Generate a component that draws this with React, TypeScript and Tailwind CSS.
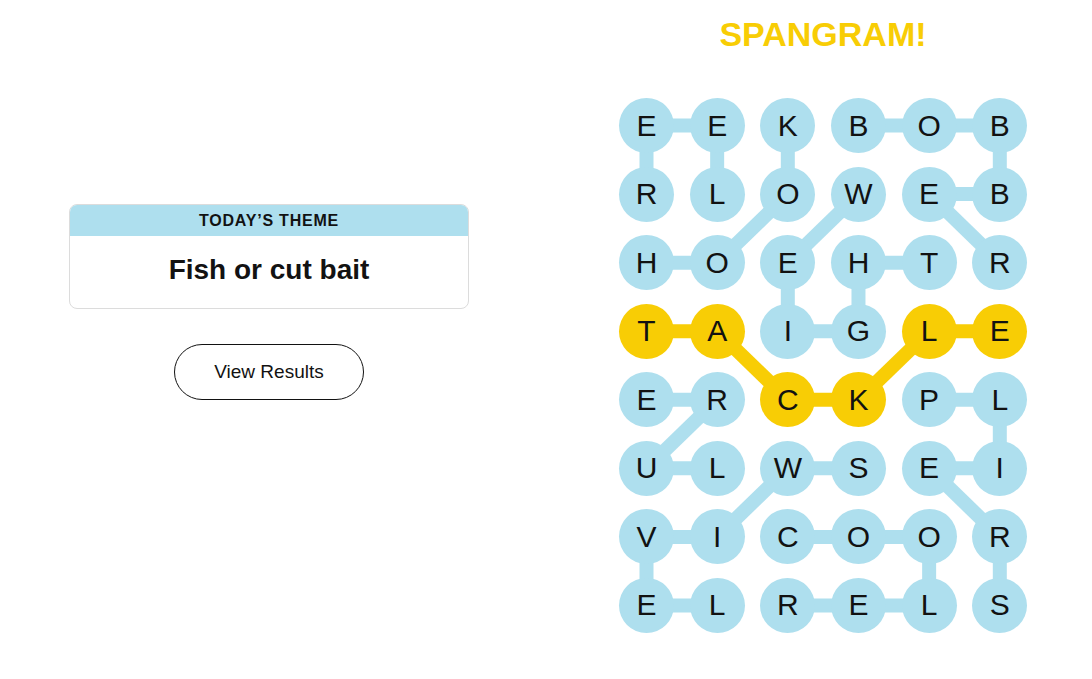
const LETTERS = [
  "EEKBOB",
  "RLOWEB",
  "HOEHTR",
  "TAIGLE",
  "ERCKPL",
  "ULWSEI",
  "VICOOR",
  "ELRELS",
];

const SPANGRAM = new Set(["3-0", "3-1", "4-2", "4-3", "3-4", "3-5"]);

// [r1, c1, r2, c2]
const BLUE_LINKS: number[][] = [
  [0, 0, 0, 1], [0, 0, 1, 0], [0, 1, 1, 1], [0, 2, 1, 2], [0, 3, 0, 4], [0, 4, 0, 5], [0, 5, 1, 5],
  [1, 4, 1, 5], [1, 2, 2, 1], [1, 3, 2, 2], [1, 4, 2, 5],
  [2, 0, 2, 1], [2, 3, 2, 4], [2, 2, 3, 2], [2, 3, 3, 3],
  [3, 2, 3, 3],
  [4, 0, 4, 1], [4, 4, 4, 5], [4, 1, 5, 0], [4, 5, 5, 5],
  [5, 0, 5, 1], [5, 2, 5, 3], [5, 4, 5, 5], [5, 2, 6, 1], [5, 4, 6, 5],
  [6, 0, 6, 1], [6, 2, 6, 3], [6, 3, 6, 4], [6, 0, 7, 0], [6, 4, 7, 4], [6, 5, 7, 5],
  [7, 0, 7, 1], [7, 2, 7, 3], [7, 3, 7, 4],
];

const YELLOW_LINKS: number[][] = [
  [3, 0, 3, 1], [3, 1, 4, 2], [4, 2, 4, 3], [4, 3, 3, 4], [3, 4, 3, 5],
];

const DX = 70.66;
const DY = 68.57;
const R = 27.5;

function cx(c: number) {
  return R + c * DX;
}
function cy(r: number) {
  return R + r * DY;
}

function Links() {
  return (
    <svg className="absolute left-0 top-0" width={408} height={536} viewBox="0 0 408 536">
      {BLUE_LINKS.map(([r1, c1, r2, c2], i) => (
        <line key={"b" + i} x1={cx(c1)} y1={cy(r1)} x2={cx(c2)} y2={cy(r2)} stroke="#aedfee" strokeWidth={14} />
      ))}
      {YELLOW_LINKS.map(([r1, c1, r2, c2], i) => (
        <line key={"y" + i} x1={cx(c1)} y1={cy(r1)} x2={cx(c2)} y2={cy(r2)} stroke="#f8cd05" strokeWidth={14} />
      ))}
    </svg>
  );
}

function Board() {
  return (
    <div className="relative w-[408px]">
      <Links />
      <div className="relative grid grid-cols-[repeat(6,55px)] gap-x-[15.66px] gap-y-[13.57px]">
        {LETTERS.map((row, r) =>
          row.split("").map((ch, c) => (
            <div
              key={r + "-" + c}
              className={
                "w-[55px] h-[55px] rounded-full flex items-center justify-center text-[30px] text-[#121212] leading-none " +
                (SPANGRAM.has(r + "-" + c) ? "bg-[#f8cd05]" : "bg-[#aedfee]")
              }
            >
              {ch}
            </div>
          ))
        )}
      </div>
    </div>
  );
}

export default function App() {
  return (
    <div className="w-full h-[679px] bg-white flex font-['Liberation_Sans',Arial,sans-serif]">
      <div className="w-[538px] flex flex-col items-center pt-[204px]">
        <div className="w-[400px] rounded-lg border border-[#dcdcdc] overflow-hidden">
          <div className="h-[31px] bg-[#aedfee] flex items-center justify-center text-[16px] font-bold tracking-[0.8px] text-[#121212]">
            TODAY’S THEME
          </div>
          <div className="h-[72px] flex items-center justify-center pb-[4px] text-[28px] font-bold text-[#121212]">
            Fish or cut bait
          </div>
        </div>
        <button className="mt-[35px] w-[190px] h-[56px] rounded-full border border-[#121212] bg-white text-[19px] text-[#121212]">
          View Results
        </button>
      </div>
      <div className="ml-[81px] w-[408px] flex flex-col">
        <div className="h-[98px] pt-[17px] text-center text-[34px] font-bold text-[#f8cd05] leading-none">
          SPANGRAM!
        </div>
        <Board />
      </div>
    </div>
  );
}
